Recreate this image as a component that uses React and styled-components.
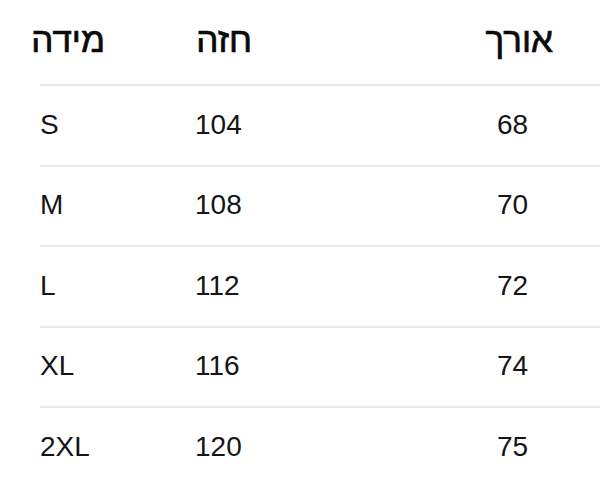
import React from "react";
import styled, { createGlobalStyle } from "styled-components";

const Global = createGlobalStyle`
  html, body { margin: 0; padding: 0; background: #ffffff; }
  body { font-family: "Liberation Sans", Arial, sans-serif; color: #111; }
`;

const Table = styled.div`
  width: 600px;
  height: 501px;
  overflow: hidden;
  background: #fff;
`;

const HeaderRow = styled.div`
  display: grid;
  grid-template-columns: 105px 147px 301px;
  height: 84px;
  box-sizing: border-box;
  padding-top: 20px;
`;

const HeaderCell = styled.div`
  direction: rtl;
  text-align: right;
  font-size: 35px;
  line-height: 40px;
  color: #0a0a0a;
  -webkit-text-stroke: 0.7px #0a0a0a;
`;

const BodyRow = styled.div`
  display: grid;
  grid-template-columns: 155px 302px 1fr;
  align-items: center;
  margin-left: 40px;
  height: 80.5px;
  box-sizing: border-box;
  border-top: 2px solid #e9e9e9;
  font-size: 28px;
  color: #151515;
`;

const BodyCell = styled.div`
  line-height: 32px;
  padding-bottom: 1px;
`;

const headers = ["מידה", "חזה", "אורך"];
const rows = [
  ["S", "104", "68"],
  ["M", "108", "70"],
  ["L", "112", "72"],
  ["XL", "116", "74"],
  ["2XL", "120", "75"],
];

export default function App() {
  return (
    <>
      <Global />
      <Table>
        <HeaderRow>
          {headers.map((h) => (
            <HeaderCell key={h}>{h}</HeaderCell>
          ))}
        </HeaderRow>
        {rows.map((r) => (
          <BodyRow key={r[0]}>
            {r.map((c, i) => (
              <BodyCell key={i}>{c}</BodyCell>
            ))}
          </BodyRow>
        ))}
      </Table>
    </>
  );
}
